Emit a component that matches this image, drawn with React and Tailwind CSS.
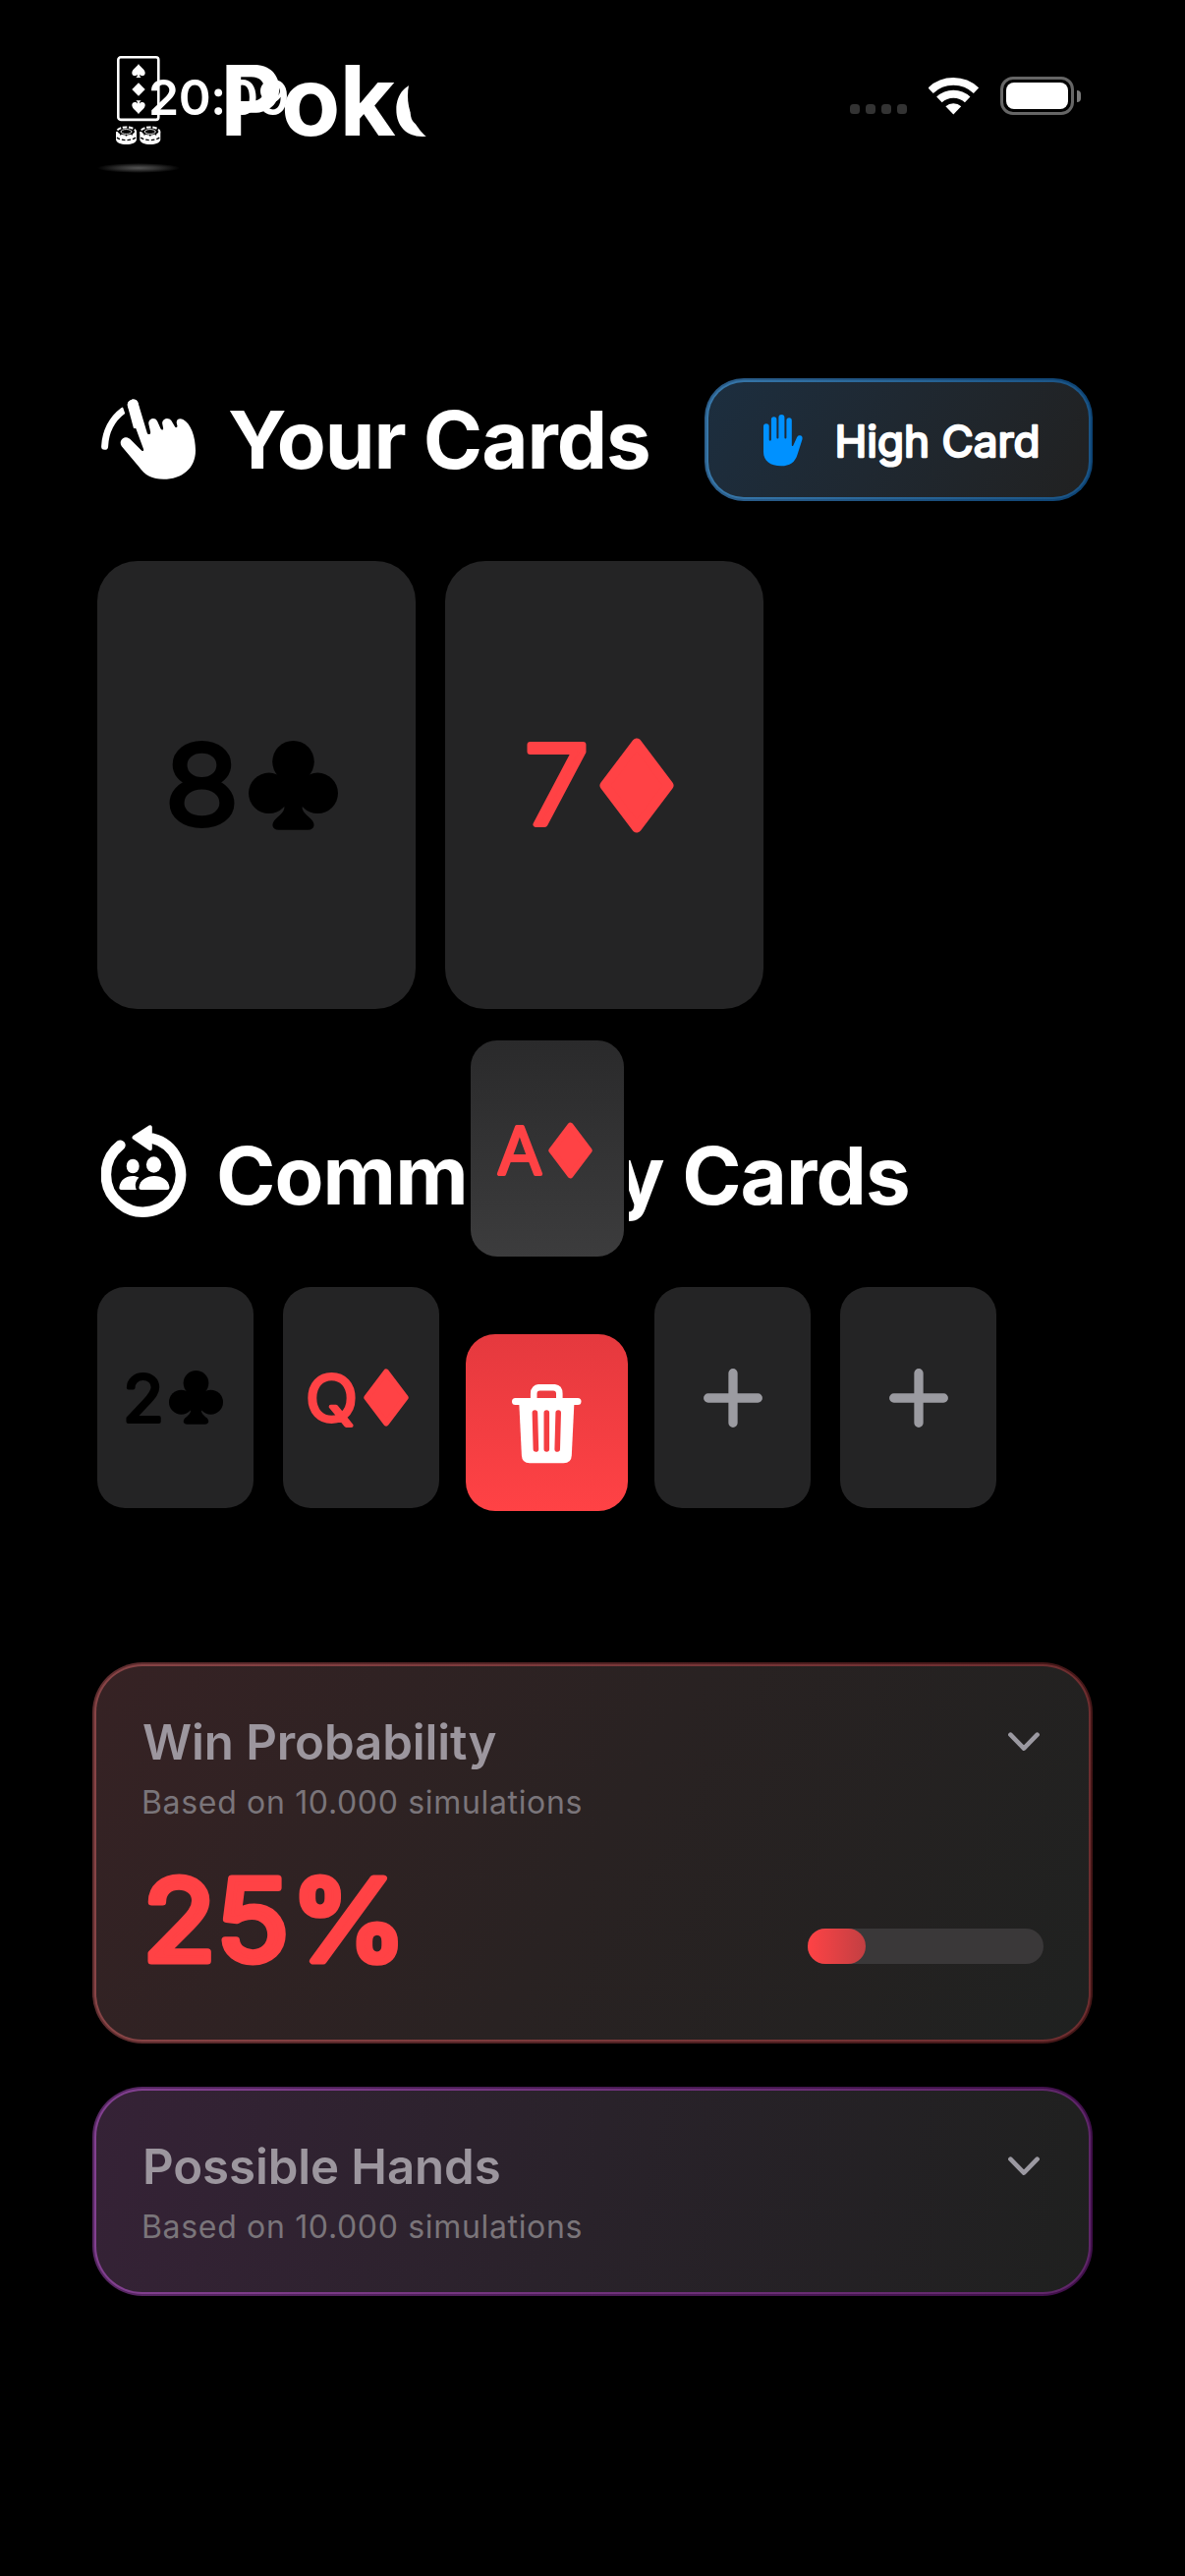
import React from "react";

const round = { strokeLinecap: "round", strokeLinejoin: "round" };

function Diamond({ className }) {
  return (
    <svg viewBox="0 0 76 97" className={className} fill="currentColor" stroke="currentColor" strokeWidth="10" {...round}>
      <path d="M38 5.5 L70.5 48.5 L38 91.5 L5.5 48.5Z" />
    </svg>
  );
}

function Club({ className }) {
  return (
    <svg viewBox="0 0 91 91" className={className} fill="currentColor">
      <circle cx="45.5" cy="21.3" r="21.3" />
      <circle cx="20.7" cy="53.3" r="20.7" />
      <circle cx="70.3" cy="53.3" r="20.7" />
      <path d="M30 36H61L54.4 68H36.6Z" />
      <path d="M36.7 66c0 6-4 9-9 13.5c-5 4.5-4.5 11.2 3 11.2h29.6c7.5 0 8-6.7 3-11.2c-5-4.5-9-7.5-9-13.5z" />
    </svg>
  );
}

/* Text with softened terminals: a lighter weight thickened by a round-joined stroke. */
function RoundText({ children, size, weight, stroke, length, w, h, x, y, className = "" }) {
  return (
    <svg width={w} height={h} className={"overflow-visible " + className}>
      <text
        x={x}
        y={y}
        textLength={length}
        lengthAdjust="spacingAndGlyphs"
        fontFamily="Inter, sans-serif"
        fontSize={size}
        fontWeight={weight}
        fill="currentColor"
        stroke="currentColor"
        strokeWidth={stroke}
        {...round}
      >
        {children}
      </text>
    </svg>
  );
}

function DragHandIcon() {
  return (
    <svg width="98" height="84" viewBox="0 0 98 84" fill="white">
      <path d="M26.9 7.2C25.6 1 35.6-2.4 37.6 4.2L46.7 34.6C47.6 37 50.6 36.4 50.1 33.6L48.3 25.5C47.6 20.4 54.6 17.8 57 22.6L60.6 30.4C61.6 32.2 63.5 31.5 63.1 29.7L62.2 25.3C61.5 20 68.7 18 71.3 22L75 28.2C76 29.9 77.8 29 77.4 27.3L76.8 24.8C76 20.4 80 19.4 83.4 20.9C91 24.8 96 38 96 52.5C96 71 82 81.8 63.5 81.8C52 81.8 44.5 77.8 38.3 69L20.8 48.3C17 42.8 23.5 36 29.5 41L41 52.4C42.6 53.8 43.6 53 43 51Z" />
      <path d="M22 12.2C11.5 20 4.3 33 3.6 48.3" fill="none" stroke="white" strokeWidth="7" strokeLinecap="round" />
      <path d="M20.5 4L26 20L30 20L25 3Z" fill="black" />
      <path d="M26.9 7.2C25.6 1 35.6-2.4 37.6 4.2L42 30L33 30Z" />
    </svg>
  );
}

function PeopleCycleIcon() {
  return (
    <svg width="88" height="96" viewBox="0 0 88 96" fill="white">
      <path d="M19.4 20.7A38 38 0 1 0 52 13.7" fill="none" stroke="white" strokeWidth="10.6" strokeLinecap="round" />
      <path d="M33.5 12.8L49.8 2.3V24.2Z" stroke="white" strokeWidth="4" strokeLinejoin="round" />
      <ellipse cx="32.2" cy="42" rx="6.5" ry="7.3" />
      <ellipse cx="53.5" cy="40.5" rx="7.6" ry="8.2" />
      <path d="M20.5 66C18.6 66 18.2 65 18.4 63.2C19.4 56 25 52 32 52C34.4 52 36.6 52.6 38.4 53.6C35.6 56.4 34.2 60 35 63.6C35.2 64.7 35.6 65.4 36 66Z" />
      <path d="M41 66C38.8 66 38.2 65 38.5 63C39.7 56 46 52 54 52S68.3 56 69.4 63C69.7 65 69 66 67 66Z" />
    </svg>
  );
}

function PalmIcon() {
  return (
    <svg width="41" height="53" viewBox="0 0 41 53" fill="#0091ff" className="mt-[2px]">
      <path d="M0 12A2.85 2.85 0 0 1 5.7 12V25.6A1.1 1.1 0 0 0 7.9 25.6V5A2.75 2.75 0 0 1 13.4 5V23.4A1 1 0 0 0 15.4 23.4V3A3 3 0 0 1 21.4 3V23.4A1 1 0 0 0 23.4 23.4V6A2.7 2.7 0 0 1 28.8 6V31.3C28.8 32.4 29.8 32.3 30.3 31.5L33.9 23.4C34.7 21.4 36.3 20.9 37.6 21.3C39.5 21.9 40 23.4 39.4 25.4L34.6 40.5C32 48.8 26.8 52.3 18 52.3C7 52.3 0 47 0 38Z" />
    </svg>
  );
}

function TrashIcon() {
  return (
    <svg width="71" height="81" viewBox="0 0 71 81">
      <path d="M22.2 16V9.5Q22.2 3.2 28.5 3.2H42Q48.3 3.2 48.3 9.5V16" fill="none" stroke="white" strokeWidth="6.6" />
      <path d="M3.5 17.5H67" stroke="white" strokeWidth="7" strokeLinecap="round" />
      <path d="M7.3 19H63.4L60.8 72.5Q60.4 80.3 52.6 80.3H18Q10.3 80.3 9.9 72.5Z" fill="white" />
      <path d="M23.4 29L24.4 66M35.3 29V66M47.2 29L46.2 66" stroke="#f43e42" strokeWidth="5.6" strokeLinecap="round" />
    </svg>
  );
}

function WifiIcon() {
  return (
    <svg width="51" height="38" viewBox="0 0 51 38" fill="none" stroke="white">
      <path d="M2.1 13.2A33.7 33.7 0 0 1 48.5 13.2" strokeWidth="7.7" />
      <path d="M10.9 22.4A20.9 20.9 0 0 1 39.7 22.4" strokeWidth="8" />
      <path d="M25.3 37.4L17.4 29.2A11.9 11.9 0 0 1 33.2 29.2Z" fill="white" stroke="none" />
    </svg>
  );
}

function Spade({ transform }) {
  return (
    <path
      transform={transform}
      d="M0-7C1-4.5 6.7-1.5 6.7 2.2C6.7 5.6 2.8 6.2 1 3.8C1 5.4 1.6 6.4 2.8 7H-2.8C-1.6 6.4-1 5.4-1 3.8C-2.8 6.2-6.7 5.6-6.7 2.2C-6.7-1.5-1-4.5 0-7Z"
    />
  );
}

function Chip({ x }) {
  return (
    <g transform={`translate(${x} 0)`}>
      <path d="M0 77.5V85C0 88 5 90 10.5 90S21 88 21 85V77.5Z" fill="white" />
      <ellipse cx="10.5" cy="77" rx="9.6" ry="4.6" fill="black" stroke="white" strokeWidth="2" strokeDasharray="4.5 1.6" />
      <ellipse cx="10.5" cy="77" rx="5.5" ry="2.4" fill="none" stroke="white" strokeWidth="0.9" />
      <path d="M1 83C4 86.4 17 86.4 20 83" fill="none" stroke="black" strokeWidth="1.3" strokeDasharray="3.5 2" />
    </g>
  );
}

function PokerIcon() {
  return (
    <svg width="46" height="92" viewBox="0 0 46 92" fill="white">
      <rect x="2.3" y="1.3" width="41" height="63.6" rx="2.6" fill="none" stroke="white" strokeWidth="2.6" />
      <Spade transform="translate(23 15)" />
      <path d="M23 27.3L29.7 34L23 40.7L16.3 34Z" />
      <Spade transform="translate(23 52.3) scale(1 -1)" />
      <Chip x={0} />
      <Chip x={24.3} />
    </svg>
  );
}

function Rank({ children, large, w, length, x }) {
  return large ? (
    <RoundText size={111} weight={300} stroke={6} length={length} w={w} h={96} x={x} y={88}>{children}</RoundText>
  ) : (
    <RoundText size={66} weight={300} stroke={4} length={length} w={w} h={62} x={x} y={55}>{children}</RoundText>
  );
}

function Plus() {
  return (
    <svg width="60" height="60" viewBox="0 0 60 60" stroke="#9b9ba1" strokeWidth="9.3" strokeLinecap="round">
      <path d="M4.7 30H55.3M30 4.7V55.3" />
    </svg>
  );
}

function SmallCard({ children, className = "" }) {
  return (
    <div className={"flex h-[225px] w-[159px] shrink-0 items-center rounded-[28px] bg-[#242425] " + className}>{children}</div>
  );
}

function Chevron() {
  return (
    <svg width="32" height="20" viewBox="0 0 32 20" fill="none" stroke="#9b99a1" strokeWidth="4.6" {...round}>
      <path d="M2.4 2.6L16 16.6L29.6 2.6" />
    </svg>
  );
}

function Panel({ title, outer, inner, fill, height, children }) {
  return (
    <section className={"rounded-[51px] p-[2px] " + outer}>
      <div className={"rounded-[49px] p-[2px] " + inner}>
        <div className={"flex flex-col rounded-[47px] pl-[46px] pr-[46px] pt-[47px] " + fill + " " + height}>
          <div className="flex items-start justify-between">
            <h3 className="ml-px h-[60px] text-[49.2px] font-semibold leading-[60px] tracking-[-0.1px] text-[#9c969e]">{title}</h3>
            <div className="pr-[4px] pt-[20px]"><Chevron /></div>
          </div>
          <p className="mt-[12px] h-[40px] text-[32px] leading-[40px] tracking-[0.67px] text-[#7a757a]">Based on 10.000 simulations</p>
          {children}
        </div>
      </div>
    </section>
  );
}

function StatusBar() {
  return (
    <div className="absolute inset-x-0 top-0 h-[176px]">
      <div className="absolute left-[415px] top-[42px] h-[111px] w-[376px] rounded-full bg-black" />
      <div className="flex items-start justify-between pl-[151px] pr-[106px] pt-[78px]">
        <span className="-mt-[9px] text-[50px] font-semibold leading-[60px] tracking-[-0.4px]">20:09</span>
        <div className="flex items-start">
          <div className="mr-[22px] mt-[27.5px] flex gap-[6px]">
            {[0, 1, 2, 3].map((i) => (
              <span key={i} className="size-[10px] rounded-[3.5px] bg-[#333333]" />
            ))}
          </div>
          <div className="mr-[22px] mt-[0.7px]"><WifiIcon /></div>
          <div className="flex h-[39px] w-[75px] items-center justify-center rounded-[13px] border-[3px] border-[#666666]">
            <div className="h-[27.5px] w-[63.5px] rounded-[8px] bg-white" />
          </div>
          <div className="ml-[3px] mt-[13.5px] h-[12px] w-[4px] rounded-r-full bg-[#7a7a7a]" />
        </div>
      </div>
    </div>
  );
}

export default function App() {
  return (
    <div className="flex h-[2622px] w-[1206px] flex-col overflow-hidden bg-black font-['Inter',sans-serif] text-white">
      <header className="relative h-[384px] shrink-0">
        <div className="flex items-start pl-[118px] pt-[57px]">
          <PokerIcon />
          <h1 className="-mt-[15px] ml-[60px] text-[98.6px] font-bold leading-[120px] tracking-[-1px]">Poker</h1>
        </div>
        <div className="absolute left-[99px] top-[166px] h-[10px] w-[84px] rounded-[50%] bg-[radial-gradient(closest-side,#555555,#2e2e2e_50%,transparent)]" />
        <StatusBar />
      </header>

      <div className="flex h-[126px] shrink-0 items-center pl-[103px] pr-[94px]">
        <div className="mr-[31px] mt-[2px]"><DragHandIcon /></div>
        <h2 className="mt-[1px] text-[81.6px] font-bold leading-[100px] tracking-[-1.05px] whitespace-nowrap">Your Cards</h2>
        <div className="ml-auto mt-[1px] rounded-[40px] bg-linear-to-r from-[#2c5f8c] to-[#0d4475] p-[2px]">
          <div className="rounded-[38px] bg-linear-to-r from-[#3777a9] to-[#1a5384] p-[2px]">
            <div className="flex h-[117px] w-[387px] items-center rounded-[36px] bg-linear-120 from-[#1c2e3f] to-[#212121] pl-[56px]">
              <PalmIcon />
              <RoundText size={43.5} weight={400} stroke={2.3} length={209} w={212} h={60} x={0.5} y={47} className="ml-[31px]">High Card</RoundText>
            </div>
          </div>
        </div>
      </div>

      <div className="mt-[61px] flex shrink-0 gap-[30px] pl-[99px]">
        <div className="flex h-[456px] w-[324px] items-center rounded-[41px] bg-[#242425] pl-[70px] text-black">
          <Rank large w={76} length={75} x={-1}>8</Rank>
          <Club className="ml-[8px] size-[91px]" />
        </div>
        <div className="flex h-[456px] w-[324px] items-center rounded-[41px] bg-[#242425] pl-[79px] text-[#ff4245]">
          <Rank large w={70} length={66} x={1.5}>7</Rank>
          <Diamond className="ml-[8px] h-[97px] w-[76px]" />
        </div>
      </div>

      <div className="mt-[118px] flex h-[96px] shrink-0 items-center pl-[103px]">
        <PeopleCycleIcon />
        <h2 className="ml-[29px] mt-[7px] text-[81.6px] font-bold leading-[100px] tracking-[-0.9px] whitespace-nowrap">Community Cards</h2>
      </div>

      <div className="mt-[69px] flex shrink-0 gap-[30px] pl-[99px]">
        <SmallCard className="pl-[26px] text-black">
          <Rank w={42} length={42} x={0}>2</Rank>
          <Club className="ml-[5px] size-[55px]" />
        </SmallCard>
        <SmallCard className="pl-[23px] text-[#ff4245]">
          <Rank w={52} length={53} x={0}>Q</Rank>
          <Diamond className="ml-[7px] h-[59px] w-[46px]" />
        </SmallCard>
        <div className="relative h-[225px] w-[159px] shrink-0">
          <div className="absolute -left-[4px] -top-[256px] h-[484px] w-[167px] rounded-[30px] bg-black" />
          <div className="absolute left-[1.5px] -top-[251px] flex h-[220px] w-[156px] items-center rounded-[27px] bg-linear-to-b from-[#2a2a2b] to-[#3c3c3d] pl-[26px] pt-[3px] text-[#ff4245]">
            <Rank w={48} length={46} x={1}>A</Rank>
            <Diamond className="ml-[5px] h-[58px] w-[45px]" />
          </div>
          <div className="absolute -left-[3px] top-[48px] flex h-[180px] w-[165px] justify-center rounded-[30px] bg-linear-to-b from-[#e5393e] to-[#ff4245] pt-[51px]">
            <TrashIcon />
          </div>
        </div>
        <SmallCard className="justify-center"><Plus /></SmallCard>
        <SmallCard className="justify-center"><Plus /></SmallCard>
      </div>

      <div className="mt-[157px] flex flex-col gap-[44px] pl-[94px] pr-[94px]">
        <Panel
          title="Win Probability"
          outer="bg-linear-to-r from-[#602e30] to-[#451718]"
          inner="bg-linear-to-r from-[#874446] to-[#6d2d2f]"
          fill="bg-linear-120 from-[#362224] via-[#292222] to-[#1f2120]"
          height="h-[380px]"
        >
          <div className="flex items-start justify-between text-[#ff4245]">
            <RoundText size={115} weight={400} stroke={7} length={270} w={280} h={130} x={1} y={140.5}>25%</RoundText>
            <div className="mt-[108px] h-[36px] w-[240px] rounded-full bg-[#3a3839]">
              <div className="h-[36px] w-[59px] rounded-full bg-linear-to-r from-[#ff4245] to-[#c23f42]" />
            </div>
          </div>
        </Panel>
        <Panel
          title="Possible Hands"
          outer="bg-linear-to-r from-[#572763] to-[#400f4a]"
          inner="bg-linear-to-r from-[#824090] to-[#5e2668]"
          fill="bg-linear-100 from-[#352236] via-[#29222a] to-[#1f201f]"
          height="h-[205px]"
        />
      </div>
    </div>
  );
}
